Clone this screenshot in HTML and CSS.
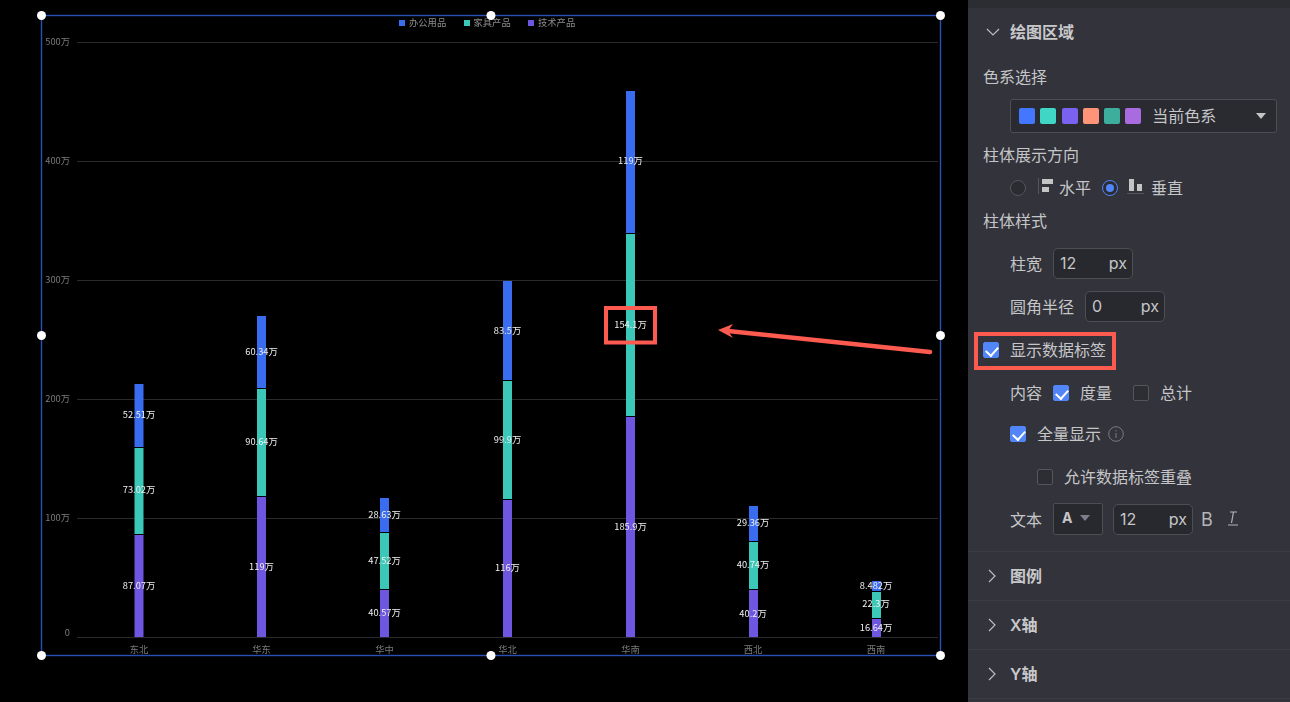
FILE: index.html
```html
<!DOCTYPE html>
<html lang="zh-CN">
<head>
<meta charset="utf-8">
<title>绘图区域</title>
<link rel="stylesheet" href="styles.css">
</head>
<body>
<main class="stage">
<svg class="chart" width="968" height="702" viewBox="0 0 968 702">
  <g class="grid">
    <line x1="77" x2="938" y1="42.5" y2="42.5"/><line x1="77" x2="938" y1="161.5" y2="161.5"/>
    <line x1="77" x2="938" y1="280.5" y2="280.5"/><line x1="77" x2="938" y1="399.5" y2="399.5"/>
    <line x1="77" x2="938" y1="518.5" y2="518.5"/><line x1="77" x2="938" y1="637.5" y2="637.5"/>
  </g>
  <g class="yaxis">
    <text x="70" y="45">500万</text><text x="70" y="164">400万</text><text x="70" y="283">300万</text>
    <text x="70" y="402">200万</text><text x="70" y="521">100万</text><text x="70" y="636">0</text>
  </g>
  <g class="xaxis">
    <text x="139" y="653">东北</text><text x="261.5" y="653">华东</text><text x="384.5" y="653">华中</text>
    <text x="507.5" y="653">华北</text><text x="630.5" y="653">华南</text><text x="753" y="653">西北</text><text x="876" y="653">西南</text>
  </g>
  <g class="s1">
    <rect x="134.5" y="384" width="9" height="63"/><rect x="257" y="316" width="9" height="72"/>
    <rect x="380" y="498" width="9" height="34"/><rect x="503" y="281" width="9" height="99"/>
    <rect x="626" y="91" width="9" height="142"/><rect x="749" y="506" width="9" height="35"/>
    <rect x="872" y="581" width="9" height="10"/>
  </g>
  <g class="s2">
    <rect x="134.5" y="448" width="9" height="86"/><rect x="257" y="389" width="9" height="107"/>
    <rect x="380" y="533" width="9" height="56"/><rect x="503" y="381" width="9" height="118"/>
    <rect x="626" y="234" width="9" height="182"/><rect x="749" y="542" width="9" height="47"/>
    <rect x="872" y="592" width="9" height="26"/>
  </g>
  <g class="s3">
    <rect x="134.5" y="535" width="9" height="102"/><rect x="257" y="497" width="9" height="140"/>
    <rect x="380" y="590" width="9" height="47"/><rect x="503" y="500" width="9" height="137"/>
    <rect x="626" y="417" width="9" height="220"/><rect x="749" y="590" width="9" height="47"/>
    <rect x="872" y="619" width="9" height="18"/>
  </g>
  <g class="labels">
    <text x="139" y="418">52.51万</text><text x="139" y="493">73.02万</text><text x="139" y="589">87.07万</text>
    <text x="261.5" y="355">60.34万</text><text x="261.5" y="445">90.64万</text><text x="261.5" y="570">119万</text>
    <text x="384.5" y="518">28.63万</text><text x="384.5" y="564">47.52万</text><text x="384.5" y="616">40.57万</text>
    <text x="507.5" y="334">83.5万</text><text x="507.5" y="443">99.9万</text><text x="507.5" y="571">116万</text>
    <text x="630.5" y="164">119万</text><text x="630.5" y="328">154.1万</text><text x="630.5" y="530">185.9万</text>
    <text x="753" y="526">29.36万</text><text x="753" y="568">40.74万</text><text x="753" y="617">40.2万</text>
    <text x="876" y="589">8.482万</text><text x="876" y="607">22.3万</text><text x="876" y="631">16.64万</text>
  </g>
  <g class="legend">
    <rect class="k1" x="399" y="20" width="6" height="6"/><text x="409" y="26">办公用品</text>
    <rect class="k2" x="464" y="20" width="6" height="6"/><text x="473.5" y="26">家具产品</text>
    <rect class="k3" x="528" y="20" width="6" height="6"/><text x="538" y="26">技术产品</text>
  </g>
  <rect class="frame" x="41.5" y="15.5" width="899" height="640"/>
  <g class="handles">
    <circle cx="41.5" cy="15.5" r="4.5"/><circle cx="491" cy="15.5" r="4.5"/><circle cx="940.5" cy="15.5" r="4.5"/>
    <circle cx="41.5" cy="335.5" r="4.5"/><circle cx="940.5" cy="335.5" r="4.5"/>
    <circle cx="41.5" cy="655.5" r="4.5"/><circle cx="491" cy="655.5" r="4.5"/><circle cx="940.5" cy="655.5" r="4.5"/>
  </g>
  <rect class="mark" x="606" y="308" width="49" height="34.5"/>
  <line class="arrow-line" x1="930" y1="352" x2="728" y2="331"/>
  <path class="arrow-head" d="M718 330 L733 324 L728 331 L733 338 Z"/>
</svg>
</main>
<aside class="panel">
  <div class="band"></div>
  <div class="head head-open">
    <svg class="chev" width="14" height="14" viewBox="0 0 14 14"><path d="M1 4 L7 10 L13 4"/></svg>
    <span>绘图区域</span>
  </div>
  <div class="label label-a">色系选择</div>
  <div class="select-wrap">
    <div class="palette">
      <i class="sw c1"></i><i class="sw c2"></i><i class="sw c3"></i><i class="sw c4"></i><i class="sw c5"></i><i class="sw c6"></i>
      <span class="palette-name">当前色系</span>
      <b class="tri"></b>
    </div>
  </div>
  <div class="label label-b">柱体展示方向</div>
  <div class="indent radios">
    <i class="radio"></i>
    <svg class="dir-h" width="16" height="16" viewBox="0 0 16 16"><rect x="0" y="0" width="1" height="16" fill="#55565c"/><rect x="4" y="1" width="11" height="5" fill="#c4c4c4"/><rect x="4" y="9" width="7" height="5" fill="#c4c4c4"/></svg>
    <span class="radio-text">水平</span>
    <i class="radio on"></i>
    <svg class="dir-v" width="17" height="16" viewBox="0 0 17 16"><rect x="0" y="15" width="17" height="1" fill="#55565c"/><rect x="2" y="1" width="5" height="12" fill="#c4c4c4"/><rect x="10" y="6" width="5" height="7" fill="#c4c4c4"/></svg>
    <span class="radio-text">垂直</span>
  </div>
  <div class="label label-b">柱体样式</div>
  <div class="indent field f1"><span>柱宽</span><div class="num"><span>12</span><span>px</span></div></div>
  <div class="indent field f2"><span>圆角半径</span><div class="num"><span>0</span><span>px</span></div></div>
  <div class="annot"><i class="cb on"></i><span>显示数据标签</span></div>
  <div class="indent opts o1">
    <span class="lead">内容</span><i class="cb on"></i><span class="t">度量</span><i class="cb cb-gap"></i><span class="t">总计</span>
  </div>
  <div class="indent opts o2">
    <i class="cb on"></i><span class="t">全量显示</span>
    <svg class="info" width="16" height="16" viewBox="0 0 16 16"><circle cx="8" cy="8" r="7.3"/><path d="M8 7 V12 M8 4 V5.4"/></svg>
  </div>
  <div class="indent2 opts o3"><i class="cb"></i><span class="t">允许数据标签重叠</span></div>
  <div class="indent field f3">
    <span>文本</span>
    <div class="font-sel"><b class="a">A</b><b class="tri tri-dim"></b></div>
    <div class="num num-s"><span>12</span><span>px</span></div>
    <span class="bold-i">B</span>
    <svg class="ital-i" width="12" height="15" viewBox="0 0 12 15"><path d="M3 1 H10 M6.5 1 L4.5 12 M1 14 H11"/></svg>
  </div>
  <div class="rule"></div>
  <div class="head head-closed">
    <svg class="chev" width="14" height="14" viewBox="0 0 14 14"><path d="M4 1 L10 7 L4 13"/></svg><span>图例</span>
  </div>
  <div class="head head-closed">
    <svg class="chev" width="14" height="14" viewBox="0 0 14 14"><path d="M4 1 L10 7 L4 13"/></svg><span>X轴</span>
  </div>
  <div class="head head-closed">
    <svg class="chev" width="14" height="14" viewBox="0 0 14 14"><path d="M4 1 L10 7 L4 13"/></svg><span>Y轴</span>
  </div>
</aside>
</body>
</html>
```
FILE: styles.css
```css
* { box-sizing: border-box; }
html, body { margin: 0; height: 100%; }
body {
  width: 1290px; height: 702px; overflow: hidden; display: flex; background: #000;
  font-family: Inter, "Noto Sans CJK SC", sans-serif; font-size: 16px; color: #c6c6c8;
}
.stage { width: 968px; height: 702px; flex: none; background: #000; }
.chart { display: block; will-change: transform; }
.chart text { font-family: "Noto Sans CJK SC", sans-serif; font-size: 9.3px; }
.grid line { stroke: #2b2b2b; stroke-width: 1; }
.yaxis text { fill: #7a7a7a; text-anchor: end; }
.xaxis text { fill: #7a7a7a; text-anchor: middle; }
.s1 rect, .k1 { fill: #3a6cf0; }
.s2 rect, .k2 { fill: #3cc8b8; }
.s3 rect, .k3 { fill: #6f56e0; }
.labels text { fill: #f0f0f0; text-anchor: middle; }
.legend text { fill: #8c8c8c; }
.frame { fill: none; stroke: #2a50b4; stroke-width: 1.4; }
.handles circle { fill: #fff; }
.mark { fill: none; stroke: #fd5a50; stroke-width: 4; }
.arrow-line { stroke: #fd5a50; stroke-width: 4.5; stroke-linecap: round; }
.arrow-head { fill: #fd5a50; }

.panel { width: 322px; height: 702px; flex: none; background: #32333b; }
.panel span, .label { padding-bottom: 2px; }
.panel .f3 span { padding-bottom: 0; }
.band { height: 8px; background: #2c2d33; }
.head { display: flex; align-items: center; font-weight: 600; color: #c8c8ca; padding-left: 17px; }
.head-open { height: 48px; }
.head-closed { height: 49px; border-bottom: 1px solid #3b3c44; }
.chev { margin-right: 11px; flex: none; fill: none; stroke: #bdbdc0; stroke-width: 1.2; }
.head-open .chev { margin-left: 1px; margin-right: 10px; }
.label { padding-left: 15px; display: flex; align-items: center; }
.label-a { height: 42px; }
.label-b { height: 44px; }
.select-wrap { padding: 1px 13px 0 42px; }
.palette {
  height: 34px; display: flex; align-items: center; padding: 0 10px 0 8px; background: #2a2b30;
  border: 1px solid #4d4e54; border-radius: 3px;
}
.sw { width: 16px; height: 16px; border-radius: 2px; margin-right: 5.3px; flex: none; }
.c1 { background: #4477ff; }
.c2 { background: #3fd6c5; }
.c3 { background: #7b61f0; }
.c4 { background: #ff9478; }
.c5 { background: #3cae9b; }
.c6 { background: #a86ce0; }
.palette-name { margin-left: 5.5px; flex: 1; }
.tri { width: 0; height: 0; border-left: 5px solid transparent; border-right: 5px solid transparent; border-top: 6px solid #c4c4c6; }
.tri-dim { border-top-color: #7d7f8d; margin-left: 8px; }
.indent { padding-left: 42px; }
.indent2 { padding-left: 69px; }
.radios { height: 22px; display: flex; align-items: center; }
.radio { width: 16px; height: 16px; border-radius: 50%; border: 1px solid #55565c; background: #2b2c31; flex: none; }
.radio.on { border-color: #5285f7; background: #2b2c31; margin-left: 11px; display: grid; place-items: center; }
.radio.on::after { content: ""; width: 8px; height: 8px; border-radius: 50%; background: #5285f7; }
.dir-h { margin-left: 12px; margin-top: -5px; }
.dir-v { margin-left: 9px; margin-top: -4px; }
.radio-text { margin-left: 5px; }
.dir-v + .radio-text { margin-left: 7px; }
.field { display: flex; align-items: center; }
.f1 { margin-top: 5px; height: 31px; }
.f2 { margin-top: 12px; height: 31px; }
.f3 { margin-top: 2px; height: 32px; }
.num {
  margin-left: 11px; width: 80px; height: 31px; display: flex; align-items: center; justify-content: space-between;
  padding: 0 5px 0 6px; background: #28292e; border: 1px solid #4d4e54; border-radius: 5px;
}
.num-s { margin-left: 10px; }
.font-sel {
  margin-left: 11px; width: 50px; height: 32px; display: flex; align-items: center; padding-left: 8px;
  background: #28292e; border: 1px solid #4d4e54; border-radius: 2px;
}
.a { font-size: 14px; font-weight: 700; margin-bottom: 3px; }
.font-sel .tri { margin-bottom: 3px; }
.bold-i { margin-left: 8px; width: 27px; font-size: 18px; color: #b5b5b8; }
.ital-i { fill: none; stroke: #b5b5b8; stroke-width: 1.2; margin-top: -2px; margin-left: -1px; }
.annot {
  margin: 10px 0 0 6px; width: 142px; height: 38px; border: 4px solid #fd5a50; display: flex; align-items: center; padding: 0 0 3px 5px;
}
.annot .cb { margin-right: 11px; }
.cb {
  width: 16px; height: 16px; border-radius: 2px; border: 1px solid #55565c; background: #2d2e33; flex: none; position: relative; display: block;
}
.cb.on { background: #5285f7; border-color: #5285f7; }
.cb.on::after {
  content: ""; position: absolute; left: 4px; top: 1px; width: 6px; height: 10px;
  border: solid #fff; border-width: 0 2px 2px 0; transform: rotate(42deg);
}
.opts { display: flex; align-items: center; }
.opts .t { margin-left: 11px; }
.o1 { height: 45px; }
.lead { margin-right: 11px; }
.cb-gap { margin-left: 21px; }
.o2 { height: 38px; }
.o3 { height: 48px; }
.info { margin-left: 7px; fill: none; stroke: #7b7c80; stroke-width: 1; }
.rule { height: 17px; border-bottom: 1px solid #3b3c44; }
```
